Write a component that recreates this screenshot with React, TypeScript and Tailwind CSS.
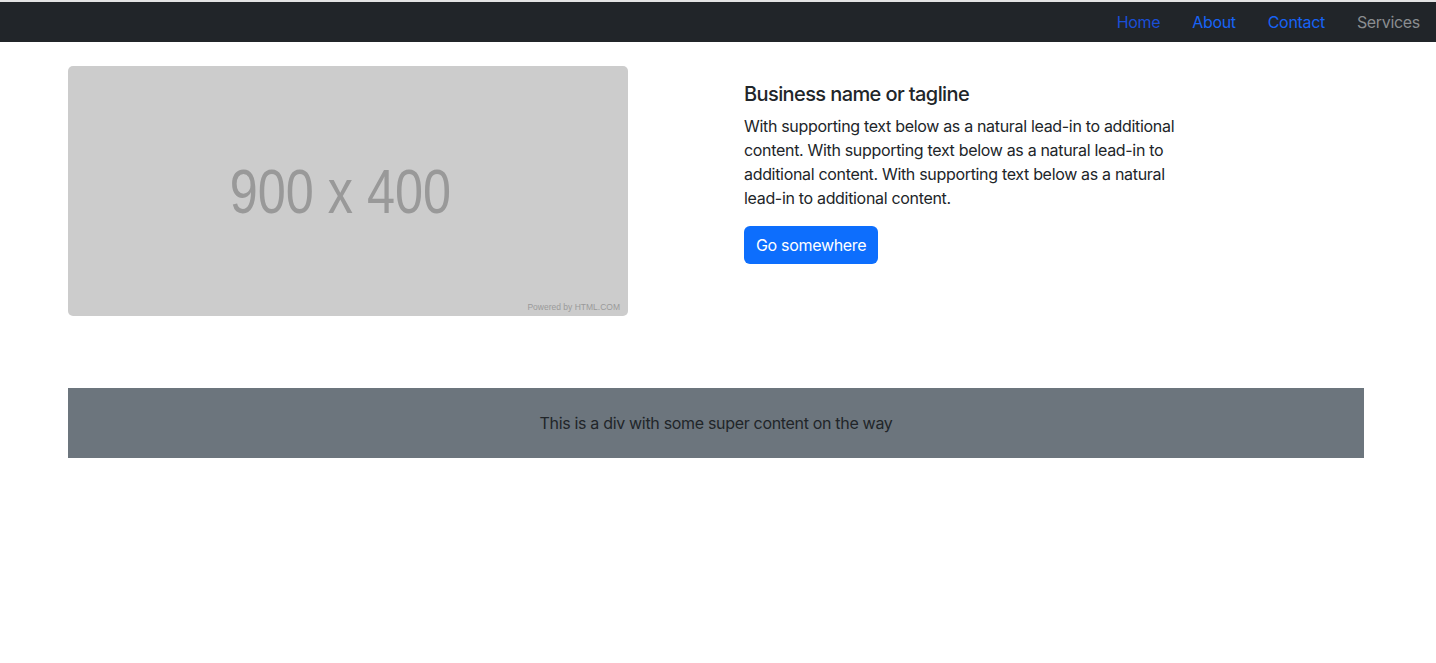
import React from "react";

export default function App() {
  return (
    <div className="min-h-[663px] bg-white font-['Inter','Noto_Sans',sans-serif] tracking-[-0.02em] text-[#212529]">
      <div className="h-[2px] bg-[#e3e3e3]" />
      <nav className="flex h-[40px] items-center justify-end bg-[#212529] text-[16px]">
        <a className="px-4 text-[#1a4fd6]" href="#">Home</a>
        <a className="px-4 text-[#1763f5]" href="#">About</a>
        <a className="px-4 text-[#1763f5]" href="#">Contact</a>
        <a className="px-4 text-[#8a8d90]" href="#">Services</a>
      </nav>
      <div className="ml-[68px] w-[1296px]">
        <div className="mt-[24px] flex items-start">
          <div className="relative flex h-[250px] w-[560px] items-center justify-center overflow-hidden rounded-[5px] bg-[#cccccc]">
            <span className="mr-[16px] inline-block origin-center scale-x-[0.8] font-['Liberation_Sans',Arial,sans-serif] text-[63px] leading-none tracking-normal text-[#999999]">
              900 x 400
            </span>
            <span className="absolute bottom-[5px] right-[8px] font-['Liberation_Sans',Arial,sans-serif] text-[8.5px] leading-none tracking-normal text-[#9a9a9a]">
              Powered by HTML.COM
            </span>
          </div>
          <div className="ml-[116px] w-[450px] pt-[16px]">
            <h2 className="text-[20px] font-medium leading-[24px] tracking-[-0.03em]">Business name or tagline</h2>
            <p className="mt-[8px] text-[16px] leading-[24px]">
              With supporting text below as a natural lead-in to additional content. With supporting text below as a natural lead-in to additional content. With supporting text below as a natural lead-in to additional content.
            </p>
            <button className="mt-[16px] h-[38px] rounded-[6px] bg-[#0d6efd] px-[12px] text-[16px] text-white">
              Go somewhere
            </button>
          </div>
        </div>
        <div className="mt-[72px] flex h-[70px] items-center justify-center bg-[#6c757d] text-[16px] text-[#212529]">
          This is a div with some super content on the way
        </div>
      </div>
    </div>
  );
}
